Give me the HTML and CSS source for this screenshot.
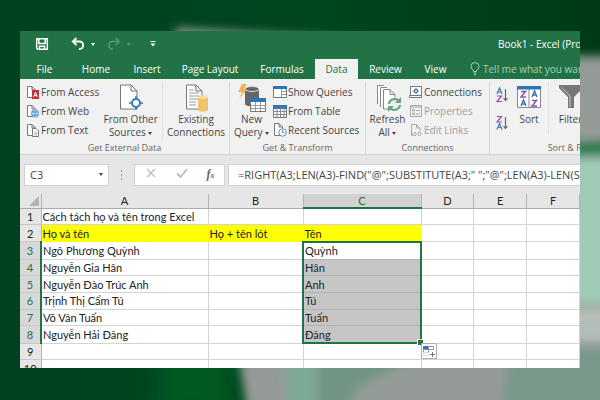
FILE: index.html
```html
<!DOCTYPE html>
<html lang="vi">
<head>
    <meta charset="UTF-8">
    <meta name="viewport" content="width=device-width, initial-scale=1.0">
    <title>Book1 - Excel</title>
    <link rel="stylesheet" href="styles.css">
</head>
<body>
    <svg class="backdrop" viewBox="0 0 600 400" preserveAspectRatio="none" aria-hidden="true">
        <defs>
            <filter id="soft" x="-20%" y="-20%" width="140%" height="140%"><feGaussianBlur stdDeviation="5"/></filter>
            <filter id="softer" x="-60%" y="-60%" width="220%" height="220%"><feGaussianBlur stdDeviation="12"/></filter>
            <linearGradient id="green">
                <stop offset="0" stop-color="#00421f"/>
                <stop offset=".5" stop-color="#00461f"/>
                <stop offset="1" stop-color="#003a16"/>
            </linearGradient>
        </defs>
        <rect width="600" height="400" fill="url(#green)"/>
        <path d="M160 350H230V420H160z" fill="#005a24" filter="url(#softer)"/>
        <g filter="url(#soft)">
            <path d="M175 28L330 37L560 56H640V440H252L236 340z" fill="#949b97"/>
            <path d="M570 142L640 138V156H570z" fill="#1f7c4f"/>
            <path d="M570 158H640V304H570z" fill="#9fcab5"/>
            <path d="M570 308H640V342H570z" fill="#b5bdb8"/>
        </g>
        <g filter="url(#soft)">
            <path d="M286 350H316V430H290z" fill="#7caa93"/>
            <path d="M318 350H430L360 386L330 430H318z" fill="#719582"/>
            <path d="M510 350L640 348V430H500z" fill="#78988a"/>
        </g>
    </svg>

    <main class="window">
        <header class="titleBar">
            <button class="quick save" aria-label="Save">
                <svg width="14" height="14" viewBox="0 0 14 14"><path d="M1.700 1.700H12.300V12.300H2.700L1.700 11.300z M3.800 2V6.500H10.200V2 M4.500 12V9.200H9.500V12" fill="none" stroke="#fff" stroke-width="1.500"/></svg>
            </button>
            <button class="quick undo" aria-label="Undo">
                <svg width="14" height="14" viewBox="0 0 14 14"><path d="M5.500 1L1.800 4.500L5.500 8M2 4.500H8.500C13.500 4.500 13.500 12 8 12" fill="none" stroke="#fff" stroke-width="1.800"/></svg>
                <span class="arrow"></span>
            </button>
            <button class="quick redo" aria-label="Redo" disabled>
                <svg width="14" height="14" viewBox="0 0 14 14"><path d="M8.500 1L12.200 4.500L8.500 8M12 4.500H5.500C.5 4.500 .5 12 6 12" fill="none" stroke="#fff" stroke-width="1.500"/></svg>
                <span class="arrow"></span>
            </button>
            <button class="quick" aria-label="Customize Quick Access Toolbar">
                <svg width="6" height="6" viewBox="0 0 6 6"><path d="M.5 0H5.500V1H.5zM.5 2.500H5.500L3 5.500z" fill="#fff"/></svg>
            </button>
            <h1>Book1 - Excel (Product Activation Failed)</h1>
        </header>

        <nav class="tabs">
            <button class="file">File</button>
            <button>Home</button>
            <button>Insert</button>
            <button>Page Layout</button>
            <button>Formulas</button>
            <button class="active">Data</button>
            <button>Review</button>
            <button>View</button>
            <button class="tellMe">
                <svg width="10" height="14" viewBox="0 0 10 14"><path d="M3.500 9.500C3.500 7.500 1 7 1 4.500A4 4 0 0 1 9 4.500C9 7 6.500 7.500 6.500 9.500zM3.500 11H6.500M4 12.800H6" fill="none" stroke="currentColor"/></svg>
                Tell me what you want to do...
            </button>
        </nav>

        <section class="ribbon">
            <div class="group external">
                <div class="tools">
                    <div class="list">
                        <button>
                            <svg width="14" height="14" viewBox="0 0 14 14"><path d="M1.500 12.500V1.500H6L9.500 5V12.500z M6 1.500V5H9.500" fill="#fff" stroke="#777"/><rect x="6" y="5" width="7" height="9" fill="#c3303a"/><path d="M7.700 12L9.500 7L11.300 12M8.300 10.500H10.700" fill="none" stroke="#fff"/></svg>
                            From Access
                        </button>
                        <button>
                            <svg width="14" height="14" viewBox="0 0 14 14"><path d="M1.500 12.500V1.500H6L9.500 5V12.500z M6 1.500V5H9.500" fill="#fff" stroke="#777"/><circle cx="9" cy="9.500" r="4" fill="#5f9bd1"/><path d="M5 9.500H13M9 5.500C6.500 8 6.500 11 9 13.500C11.500 11 11.500 8 9 5.500" fill="none" stroke="#d5e6f5" stroke-width=".7"/></svg>
                            From Web
                        </button>
                        <button>
                            <svg width="14" height="14" viewBox="0 0 14 14"><path d="M1.500 12.500V1.500H6L9.500 5V12.500z M6 1.500V5H9.500" fill="#fff" stroke="#777"/><path d="M6.500 5.500H10L12.500 8V13.500H6.500z" fill="#fff" stroke="#777"/><path d="M8 9H11M8 10.500H11M8 12H11" stroke="#999" stroke-width=".7"/></svg>
                            From Text
                        </button>
                    </div>
                    <button class="large sources">
                        <svg width="28" height="28" viewBox="0 0 28 28"><path d="M3.500 25V1H14L20 7V25z M14 1V7H20" fill="#fff" stroke="#777"/><g stroke="#3b78b8" fill="#fff"><path d="M19 12V26M12 19H26" stroke-width="1.500"/><circle cx="19" cy="19" r="4" stroke-width="2"/></g></svg>
                        <span>From Other<br>Sources <i class="arrow"></i></span>
                    </button>
                    <button class="large existing">
                        <svg width="28" height="28" viewBox="0 0 28 28"><path d="M4.500 25V1H14L20 7V25z M14 1V7H20" fill="#fff" stroke="#777"/><path d="M7 6H12M7 9H17M7 12H17M7 15H17M7 18H14M7 21H14" stroke="#999"/><path d="M16 13V26C16 28 26 28 26 26V13z" fill="#f0c36d"/><ellipse cx="21" cy="13" rx="5" ry="2" fill="#f8dda3"/></svg>
                        <span>Existing<br>Connections</span>
                    </button>
                </div>
                <h2>Get External Data</h2>
            </div>

            <div class="group transform">
                <div class="tools">
                    <button class="large query">
                        <svg width="28" height="28" viewBox="0 0 28 28"><path d="M7 5V20C7 23 21 23 21 20V5z" fill="#666"/><ellipse cx="14" cy="5" rx="7" ry="2.500" fill="#666" stroke="#ddd"/><path d="M4 0H9L6 5H9L1 15L4 8H0z" fill="#f0b355"/><path d="M12.500 15H27.500V27.500H12.500z" fill="#fff" stroke="#777"/><path d="M12 14H28V18H12z" fill="#2e75b6"/><path d="M17.500 18V27M22.500 18V27M13 21.500H27M13 24.500H27" stroke="#999"/></svg>
                        <span>New<br>Query <i class="arrow"></i></span>
                    </button>
                    <div class="list">
                        <button>
                            <svg width="14" height="14" viewBox="0 0 14 14"><path d="M.5 1.500H13.500V12.500H.5z" fill="#fff" stroke="#777"/><path d="M0 1H14V4H0z" fill="#2e75b6"/><path d="M8.500 4V12M9 6.500H13M9 9.500H13" stroke="#999"/></svg>
                            Show Queries
                        </button>
                        <button>
                            <svg width="14" height="14" viewBox="0 0 14 14"><path d="M.5 1.500H13.500V13.500H.5z" fill="#fff" stroke="#777"/><path d="M0 1H14V5H0z" fill="#2e75b6"/><path d="M4 3V13M7.500 3V13M11 3V13M0 7.500H13M0 10.500H13" stroke="#888"/></svg>
                            From Table
                        </button>
                        <button>
                            <svg width="14" height="14" viewBox="0 0 14 14"><path d="M1.500 12.500V.5H6L9.500 4V12.500z M6 .5V4H9.500" fill="#fff" stroke="#777"/><circle cx="9.500" cy="9.500" r="3.700" fill="#fff" stroke="#5f8fb8"/><path d="M9.500 7V9.700H11.500" fill="none" stroke="#5f8fb8"/></svg>
                            Recent Sources
                        </button>
                    </div>
                </div>
                <h2>Get &amp; Transform</h2>
            </div>

            <div class="group connections">
                <div class="tools">
                    <button class="large refresh">
                        <svg width="28" height="28" viewBox="0 0 28 28"><path d="M3.500 20V1.500H10M6.500 23V3.500H13" fill="#fff" stroke="#888"/><path d="M9.500 25V5.500H16L21 10.500V25z M16 5.500V10.500H21" fill="#fff" stroke="#888"/><circle cx="20.500" cy="20.500" r="7" fill="#f1f1f1"/><path d="M15 20C15.500 15 22 13.500 25 17M26 21C25.500 26 19 27.500 16 24" fill="none" stroke="#6aa583" stroke-width="2.200"/><path d="M27 13V19H21zM14 28V22H20z" fill="#6aa583"/></svg>
                        <span>Refresh<br>All <i class="arrow"></i></span>
                    </button>
                    <div class="list">
                        <button>
                            <svg width="14" height="14" viewBox="0 0 14 14"><path d="M3 10.500H.5V12.500H12.500V10.500M1.500 10V1.500H12.500V10.500H3" fill="#fff" stroke="#777"/><path d="M7 3L10 6L7 9L4 6z" fill="#2e75b6"/><circle cx="7" cy="6" r="1" fill="#fff"/></svg>
                            Connections
                        </button>
                        <button disabled>
                            <svg width="14" height="14" viewBox="0 0 14 14"><path d="M1.500 1.500H12.500V12.500H1.500z M1.500 3H12.500" fill="none" stroke="#aaa"/><path d="M3.500 5.500H5.500V7H3.500zM3.500 9H5.500V10.500H3.500zM7 6.500H11M7 10H11" fill="none" stroke="#b0a8b5"/></svg>
                            Properties
                        </button>
                        <button disabled>
                            <svg width="14" height="14" viewBox="0 0 14 14"><path d="M4 12.500H2.500V1.500H7.500L11 5V9 M7.500 1.500V5H11" fill="none" stroke="#aaa"/><path d="M7 9.500H5.500C3.500 9.500 3.500 12.500 5.500 12.500H7M9 9.500H10.500C12.500 9.500 12.500 12.500 10.500 12.500H9M6 11H10" fill="none" stroke="#aaa"/></svg>
                            Edit Links
                        </button>
                    </div>
                </div>
                <h2>Connections</h2>
            </div>

            <div class="group sorting">
                <div class="tools">
                    <div class="sortButtons">
                        <button aria-label="Sort A to Z">
                            <svg width="14" height="16" viewBox="0 0 14 16"><path d="M1 7L3.500 1L6 7M2 5H5" fill="none" stroke="#3b78b8" stroke-width="1.200"/><path d="M1 9H5.500L1 14.500H6" fill="none" stroke="#9150a8" stroke-width="1.200"/><path d="M9.500 2V13M7.500 11L9.500 13.500L11.500 11" fill="none" stroke="#666" stroke-width="1.200"/></svg>
                        </button>
                        <button aria-label="Sort Z to A">
                            <svg width="14" height="16" viewBox="0 0 14 16"><path d="M1 1.500H5.500L1 7H6" fill="none" stroke="#9150a8" stroke-width="1.200"/><path d="M1 14.500L3.500 8.500L6 14.500M2 12.500H5" fill="none" stroke="#3b78b8" stroke-width="1.200"/><path d="M9.500 2V13M7.500 11L9.500 13.500L11.500 11" fill="none" stroke="#666" stroke-width="1.200"/></svg>
                        </button>
                    </div>
                    <button class="large sort">
                        <svg width="26" height="28" viewBox="0 0 26 28"><path d="M1.500 3.500H24.500V23.500H1.500z M13 4V23" fill="#fff" stroke="#888"/><path d="M1 2H25V5.500H1z" fill="#2e75b6"/><g fill="none" stroke-width="1.500"><path d="M5 7.500H9.500L5 13H10M16 16.500H20.500L16 22H21" stroke="#9150a8"/><path d="M5 22L7.500 16L10 22M6 20H9M16 13L18.500 7L21 13M17 11H20" stroke="#3b78b8"/></g></svg>
                        <span>Sort</span>
                    </button>
                    <button class="large filter">
                        <svg width="26" height="28" viewBox="0 0 26 28"><path d="M1 1H25V4L16 13V24H10V13L1 4z" fill="#777"/><path d="M4 3.500L12 12V23" fill="none" stroke="#ccc"/></svg>
                        <span>Filter</span>
                    </button>
                </div>
                <h2>Sort &amp; Filter</h2>
            </div>
        </section>

        <section class="formulaBar">
            <label class="nameBox">
                <input type="text" value="C3" aria-label="Name Box">
                <span class="arrow"></span>
            </label>
            <span class="grip"></span>
            <div class="formulaButtons">
                <button aria-label="Cancel"><svg width="12" height="12" viewBox="0 0 12 12"><path d="M2 2L10 10M10 2L2 10" stroke="#bbb" stroke-width="1.300"/></svg></button>
                <button aria-label="Enter"><svg width="12" height="12" viewBox="0 0 12 12"><path d="M1 6.500L4.500 10L11 2" fill="none" stroke="#bbb" stroke-width="1.800"/></svg></button>
                <button class="fx" aria-label="Insert Function">f<small>x</small></button>
            </div>
            <input class="formula" type="text" aria-label="Formula" value='=RIGHT(A3;LEN(A3)-FIND("@";SUBSTITUTE(A3;" ";"@";LEN(A3)-LEN(SUBSTITUTE(A3;" ";"")))))'>
        </section>

        <table class="sheet">
            <colgroup>
                <col class="colRow"><col class="colA"><col class="colB"><col class="colC"><col><col><col>
            </colgroup>
            <thead>
                <tr><th><svg class="corner" width="10" height="10" viewBox="0 0 10 10"><path d="M10 0V10H0z" fill="#b5b5b5"/></svg></th><th>A</th><th>B</th><th class="selected">C</th><th>D</th><th>E</th><th>F</th></tr>
            </thead>
            <tbody>
                <tr><th>1</th><td>Cách tách họ và tên trong Excel</td><td></td><td></td><td></td><td></td><td></td></tr>
                <tr class="heading"><th>2</th><td>Họ và tên</td><td>Họ + tên lót</td><td>Tên</td><td></td><td></td><td></td></tr>
                <tr class="picked"><th>3</th><td>Ngô Phương Quỳnh</td><td></td><td class="range first">Quỳnh</td><td></td><td></td><td></td></tr>
                <tr class="picked"><th>4</th><td>Nguyễn Gia Hân</td><td></td><td class="range">Hân</td><td></td><td></td><td></td></tr>
                <tr class="picked"><th>5</th><td>Nguyễn Đào Trúc Anh</td><td></td><td class="range">Anh</td><td></td><td></td><td></td></tr>
                <tr class="picked"><th>6</th><td>Trịnh Thị Cẩm Tú</td><td></td><td class="range">Tú</td><td></td><td></td><td></td></tr>
                <tr class="picked"><th>7</th><td>Võ Văn Tuấn</td><td></td><td class="range">Tuấn</td><td></td><td></td><td></td></tr>
                <tr class="picked"><th>8</th><td>Nguyễn Hải Đăng</td><td></td><td class="range last">Đăng
                    <span class="handle"></span>
                    <button class="fillOptions" aria-label="Auto Fill Options"><svg width="14" height="14" viewBox="0 0 14 14"><path d="M1.500 2.500H6.500V5.500H1.500z" fill="#3d6fc4" stroke="#3d6fc4"/><path d="M6.500 2.500H11.500V5.500H6.500zM1.500 5.500H6.500V8.500H1.500z" fill="#fff" stroke="#8a96a8"/><path d="M1.500 8.500H6.500V11.500H1.500z" fill="#fff" stroke="#ddd"/><path d="M10.500 8V13M8 10.500H13" stroke="#777"/></svg></button>
                </td><td></td><td></td><td></td></tr>
                <tr><th>9</th><td></td><td></td><td></td><td></td><td></td><td></td></tr>
                <tr><th>10</th><td></td><td></td><td></td><td></td><td></td><td></td></tr>
            </tbody>
        </table>
    </main>
</body>
</html>
```
FILE: styles.css
```css
* {
    box-sizing: border-box;
}
body {
    margin: 0;
    height: 100vh;
    padding: 31px 20px 32px;
    display: flex;
    background-color: #00421f;
    font-family: "Open Sans", "Noto Sans", sans-serif;
    font-size: 10px;
    color: #444;
}
button, input {
    font: inherit;
    color: inherit;
    border: none;
    background: none;
    padding: 0;
    margin: 0;
}
button {
    white-space: nowrap;
}
svg {
    flex: none;
}
.backdrop {
    position: absolute;
    top: 0;
    left: 0;
    width: 100%;
    height: 100%;
}
.window {
    position: relative;
    flex: 1;
    min-width: 0;
    overflow: hidden;
    display: flex;
    flex-direction: column;
    background-color: #e6e6e6;
}
.arrow {
    display: inline-block;
    flex: none;
    border: 2px solid transparent;
    border-top: 3px solid currentColor;
    border-bottom: none;
    vertical-align: middle;
}

/* Title bar */
.titleBar {
    flex: none;
    height: 28px;
    padding: 0 0 2px 15px;
    display: flex;
    align-items: center;
    background-color: #217346;
    color: white;
}
.quick {
    display: flex;
    align-items: center;
    gap: 6px;
}
.save {
    margin-right: 22px;
}
.undo, .redo {
    margin-right: 12px;
}
.redo {
    opacity: 0.25;
    margin-right: 19px;
}
.titleBar h1 {
    margin: 0 0 0 auto;
    flex: 0 0 82px;
    min-width: 0;
    font-size: 10px;
    font-weight: normal;
    white-space: nowrap;
}

/* Ribbon tabs */
.tabs {
    flex: none;
    height: 20px;
    display: grid;
    grid-template-columns: 49px 54px 48px 78px 66px 43px 55px 45px 1fr;
    background-color: #217346;
    color: white;
}
.tabs .active {
    background-color: #f1f1f1;
    color: #217346;
}
.tabs .tellMe {
    display: flex;
    align-items: center;
    gap: 3px;
    padding-left: 12px;
    color: #a6cdb6;
}

/* Ribbon */
.ribbon {
    flex: none;
    height: 76px;
    display: flex;
    background-color: #f1f1f1;
    border-bottom: 1px solid #d2d2d2;
}
.group {
    flex: none;
    display: flex;
    flex-direction: column;
    justify-content: space-between;
    margin: 3px 0 0;
    border-right: 1px solid #d8d8d8;
}
.external {
    width: 210px;
}
.transform {
    width: 136px;
}
.connections {
    width: 124px;
}
.sorting {
    width: 166px;
}
.group h2 {
    margin: 0;
    text-align: center;
    font-size: 9px;
    line-height: 13px;
    font-weight: normal;
    color: #666;
}
.tools {
    display: flex;
}
.list {
    display: flex;
    flex-direction: column;
    padding-left: 6px;
}
.list button {
    display: flex;
    align-items: center;
    gap: 1px;
    height: 19px;
}
.list button:disabled {
    color: #a0a0a0;
}
.large {
    display: flex;
    flex-direction: column;
    align-items: center;
    gap: 1px;
    padding-top: 2px;
    line-height: 13px;
}
.sources {
    width: 64px;
    margin-left: auto;
    border-right: 1px solid #e0e0e0;
}
.existing {
    width: 66px;
}
.query {
    width: 43px;
}
.query + .list {
    padding-left: 0;
}
.refresh {
    width: 43px;
}
.refresh + .list {
    padding-left: 0;
}
.sortButtons {
    display: flex;
    flex-direction: column;
    gap: 9px;
    padding: 5px 0 0 6px;
}
.sort {
    width: 39px;
    border-right: 1px solid #e0e0e0;
}
.filter {
    width: 43px;
}

/* Formula bar */
.formulaBar {
    flex: none;
    display: flex;
    align-items: center;
    height: 39px;
    padding-left: 4px;
}
.nameBox {
    display: flex;
    align-items: center;
    justify-content: space-between;
    width: 85px;
    height: 22px;
    padding: 0 5px;
    background-color: white;
    border: 1px solid #d0d0d0;
}
.nameBox input {
    width: 50px;
    font-size: 11px;
}
.grip {
    width: 25px;
    height: 10px;
    background: radial-gradient(circle, #999 1px, transparent 1px) center / 25px 4px;
}
.formulaButtons {
    display: flex;
    align-items: center;
    justify-content: space-around;
    width: 91px;
    height: 22px;
    background-color: white;
    border: 1px solid #d0d0d0;
}
.fx {
    font: italic bold 12px "Liberation Serif", serif;
    color: #666;
}
.fx small {
    font-size: 8px;
}
.formula {
    flex: 1;
    min-width: 0;
    height: 22px;
    margin-left: 3px;
    padding-left: 9px;
    background-color: white;
    border: 1px solid #d0d0d0;
    border-right: none;
    font-size: 11px;
}

/* Sheet */
.sheet {
    flex: none;
    width: 100%;
    height: 183px;
    table-layout: fixed;
    border-collapse: collapse;
    background-color: white;
    font-family: Lato, "Noto Sans", sans-serif;
    font-size: 11px;
    line-height: 13px;
    color: #222;
}
.colRow {
    width: 21px;
}
.colA {
    width: 167px;
}
.colB {
    width: 95px;
}
.colC {
    width: 118px;
}
.sheet th {
    padding: 0;
    font-weight: normal;
    background-color: #e6e6e6;
    border-right: 1px solid #b5b5b5;
    border-bottom: 1px solid #c8c8c8;
}
.sheet thead th {
    border-bottom-color: #ababab;
}
.sheet thead .selected {
    background-color: #d2d2d2;
    color: #217346;
    border-bottom: 2px solid #217346;
}
.corner {
    display: block;
    margin-left: auto;
    margin-right: 2px;
}
.sheet td {
    padding: 0 0 0 1px;
    white-space: nowrap;
    border: 1px solid #d4d4d4;
}
.heading td:nth-child(-n+4) {
    background-color: #ff0;
    border-color: #ff0;
}
.picked th {
    background-color: #d8d8d8;
    color: #217346;
    border-right: 2px solid #217346;
}
.sheet .range {
    background-color: #c6c6c6;
    border-color: #b2b2b2;
    border-left: 2px solid #217346;
    border-right: 2px solid #217346;
}
.sheet .first {
    background-color: white;
    border-top: 2px solid #217346;
}
.sheet .last {
    position: relative;
    border-bottom: 2px solid #217346;
}
.handle {
    position: absolute;
    right: -3px;
    bottom: -3px;
    width: 5px;
    height: 5px;
    background-color: #217346;
    outline: 1px solid white;
}
.fillOptions {
    position: absolute;
    top: 100%;
    left: 100%;
    display: flex;
    margin: 1px;
    background-color: white;
    border: 1px solid #b0b0b0;
}
```
